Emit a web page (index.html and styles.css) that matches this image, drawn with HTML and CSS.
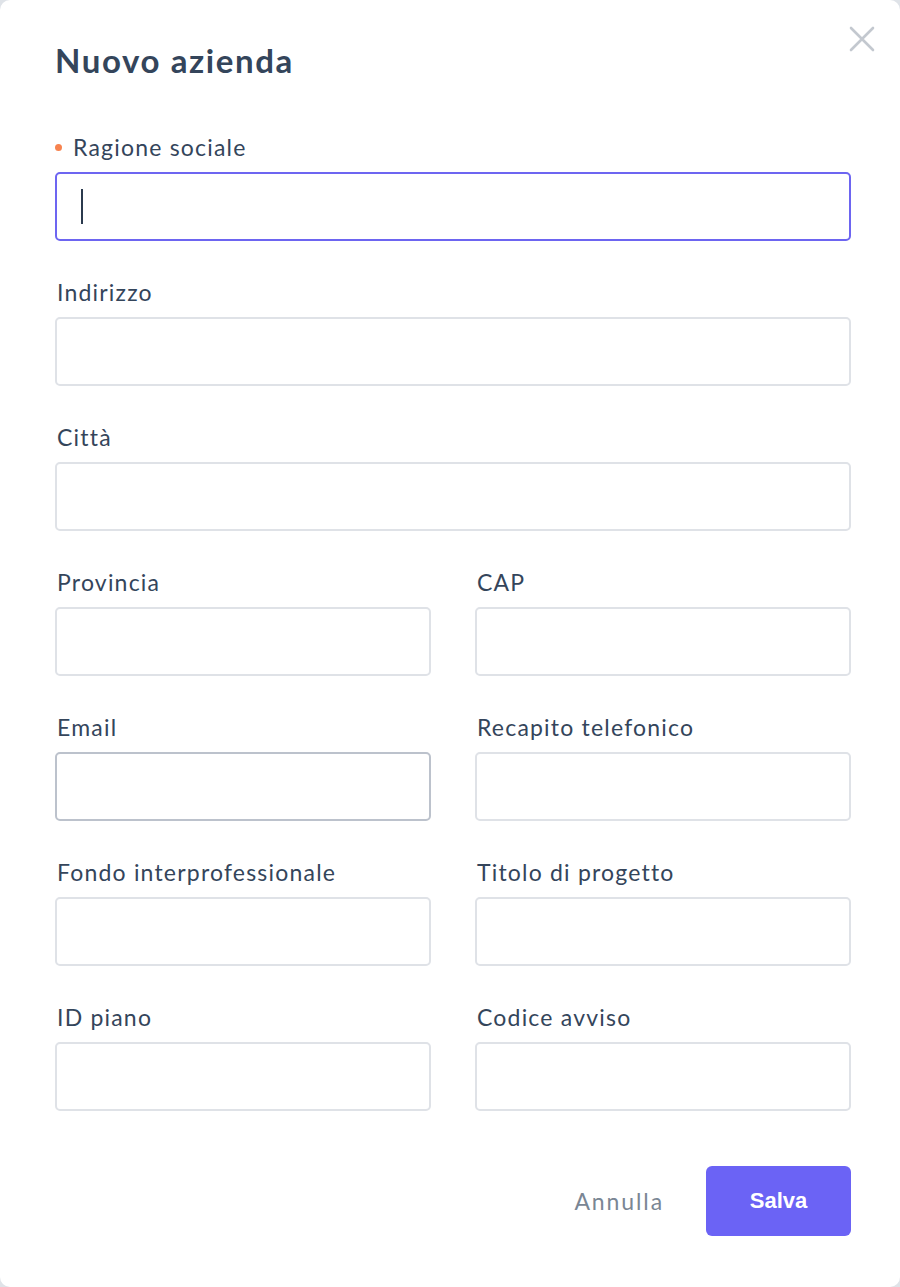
FILE: index.html
```html
<!DOCTYPE html>
<html lang="it">
<head>
<meta charset="utf-8">
<title>Nuovo azienda</title>
<link rel="stylesheet" href="styles.css">
</head>
<body>
<div class="modal">
  <button class="close" aria-label="Chiudi">
    <svg width="26" height="26" viewBox="0 0 26 26"><path d="M2 2L24 24M24 2L2 24" stroke="#c3c8cf" stroke-width="2.6" stroke-linecap="round"/></svg>
  </button>
  <h1 class="title">Nuovo azienda</h1>
  <form class="form">
    <div class="field full">
      <label class="label required">Ragione sociale</label>
      <div class="input-wrap">
        <input class="input focused" type="text">
        <span class="caret"></span>
      </div>
    </div>
    <div class="field full">
      <label class="label">Indirizzo</label>
      <input class="input" type="text">
    </div>
    <div class="field full">
      <label class="label">Città</label>
      <input class="input" type="text">
    </div>
    <div class="field">
      <label class="label">Provincia</label>
      <input class="input" type="text">
    </div>
    <div class="field">
      <label class="label">CAP</label>
      <input class="input" type="text">
    </div>
    <div class="field">
      <label class="label">Email</label>
      <input class="input hover" type="text">
    </div>
    <div class="field">
      <label class="label">Recapito telefonico</label>
      <input class="input" type="text">
    </div>
    <div class="field">
      <label class="label">Fondo interprofessionale</label>
      <input class="input" type="text">
    </div>
    <div class="field">
      <label class="label">Titolo di progetto</label>
      <input class="input" type="text">
    </div>
    <div class="field">
      <label class="label">ID piano</label>
      <input class="input" type="text">
    </div>
    <div class="field">
      <label class="label">Codice avviso</label>
      <input class="input" type="text">
    </div>
  </form>
  <div class="actions">
    <button class="btn-cancel" type="button">Annulla</button>
    <button class="btn-save" type="button">Salva</button>
  </div>
</div>
</body>
</html>
```

FILE: styles.css
```css
* { box-sizing: border-box; }
html, body { margin: 0; padding: 0; }
body {
  background: #dfe3e8;
  font-family: "Lato", "Noto Sans", sans-serif;
  color: #34455b;
}
.modal {
  position: relative;
  width: 900px;
  height: 1287px;
  background: #fff;
  border-radius: 10px;
  padding: 40px 49px 0 55px;
}
.close {
  position: absolute;
  top: 26px;
  right: 25px;
  background: none;
  border: 0;
  padding: 0;
  width: 26px;
  height: 26px;
  cursor: pointer;
}
.close svg { display: block; }
.title {
  margin: 0;
  font-size: 33px;
  line-height: 40px;
  font-weight: 700;
  letter-spacing: 1.6px;
  color: #34455b;
}
.form {
  margin-top: 52px;
  display: grid;
  grid-template-columns: 1fr 1fr;
  column-gap: 44px;
  row-gap: 36px;
}
.field { display: flex; flex-direction: column; gap: 10px; }
.field.full { grid-column: 1 / -1; }
.label {
  display: flex;
  align-items: center;
  font-size: 23px;
  line-height: 30px;
  height: 30px;
  padding-left: 2px;
  letter-spacing: 1.2px;
  color: #34455b;
}
.label.required { padding-left: 0; }
.label.required::before {
  content: "";
  width: 7px;
  height: 7px;
  border-radius: 50%;
  background: #f7834f;
  margin: 0 11px 0 0;
}
.input-wrap { position: relative; }
.input {
  display: block;
  width: 100%;
  height: 69px;
  border: 2px solid #dfe2e7;
  border-radius: 5px;
  background: #fff;
  font: inherit;
  padding: 0 24px;
  outline: none;
}
.input.focused { border-color: #6d65f1; }
.input.hover { border-color: #bcc2cc; }
.caret {
  position: absolute;
  left: 26px;
  top: 17px;
  width: 2px;
  height: 35px;
  background: #2b3a4e;
}
.actions {
  margin-top: 55px;
  display: flex;
  justify-content: flex-end;
  align-items: center;
  gap: 42px;
}
.btn-cancel {
  background: none;
  border: 0;
  padding: 0;
  font: inherit;
  font-size: 23px;
  letter-spacing: 1.9px;
  color: #7a8694;
  cursor: pointer;
}
.btn-save {
  width: 145px;
  height: 70px;
  border: 0;
  border-radius: 6px;
  background: #6b63f5;
  color: #fff;
  font-family: "Liberation Sans", Arial, sans-serif;
  font-weight: 700;
  font-size: 22px;
  cursor: pointer;
}
```
